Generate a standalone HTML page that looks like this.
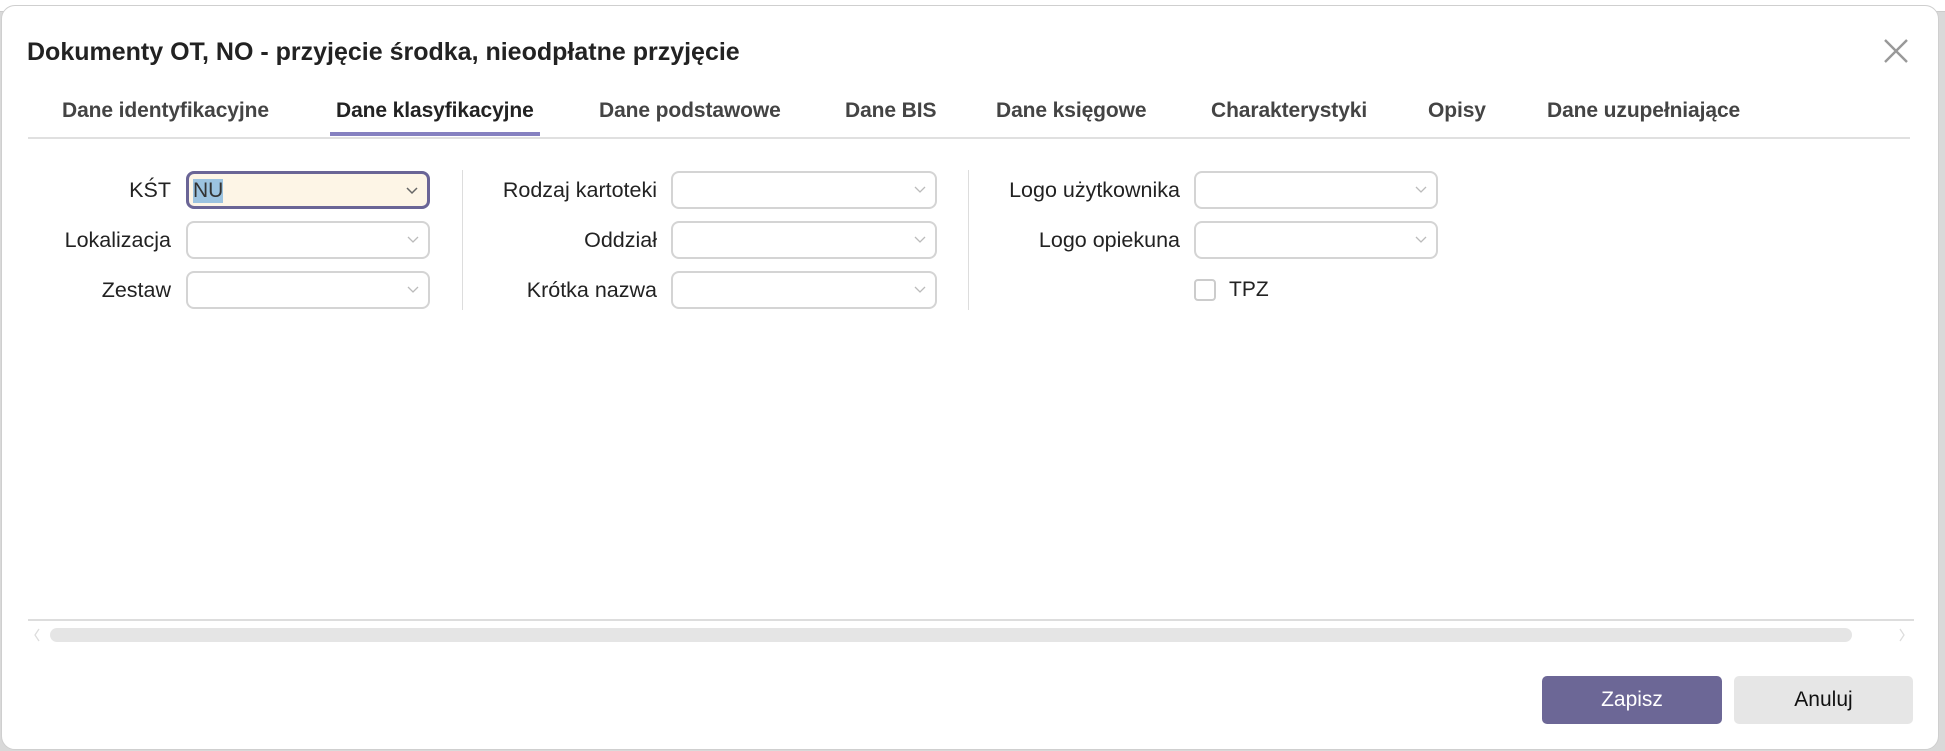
<!DOCTYPE html>
<html><head><meta charset="utf-8"><style>
*{box-sizing:border-box;margin:0;padding:0}
body{width:1945px;height:751px;background:#d9d9d9;position:relative;overflow:hidden;font-family:"Liberation Sans",sans-serif;color:#222}
.bg{position:absolute;left:0;top:0;width:1945px;height:12px;background:#fff;border-bottom:1px solid #ccc}
.dlg{position:absolute;left:1px;top:5px;width:1938px;height:745px;background:#fff;border-radius:14px;border:1px solid #cfcfcf}
.a{position:absolute;white-space:nowrap}
.title{left:27px;top:38px;font-size:25px;font-weight:bold;color:#222}
.tab{top:99px;font-size:21px;color:#444;font-weight:bold;letter-spacing:-0.1px}
.lbl{font-size:21.5px;color:#222;text-align:right;height:38px;line-height:38px}
.box{position:absolute;height:38px;border:2px solid #d4d4d4;border-radius:8px;background:#fff}
.box svg{position:absolute;right:9px;top:13px}
.sep{position:absolute;width:1px;background:#ddd}
</style></head><body>
<div class="bg"></div>
<div class="dlg"></div>
<div class="a title">Dokumenty OT, NO - przyjęcie środka, nieodpłatne przyjęcie</div>
<svg class="a" style="left:1884px;top:39px" width="24" height="24" viewBox="0 0 24 24"><path d="M1 1L23 23M23 1L1 23" stroke="#999" stroke-width="2.4" fill="none"/></svg>
<div class="a tab" style="left:62px">Dane identyfikacyjne</div>
<div class="a tab" style="left:336px;color:#222">Dane klasyfikacyjne</div>
<div class="a tab" style="left:599px">Dane podstawowe</div>
<div class="a tab" style="left:845px">Dane BIS</div>
<div class="a tab" style="left:996px">Dane księgowe</div>
<div class="a tab" style="left:1211px">Charakterystyki</div>
<div class="a tab" style="left:1428px">Opisy</div>
<div class="a tab" style="left:1547px">Dane uzupełniające</div>
<div class="a" style="left:28px;top:137px;width:1882px;height:2px;background:#e0e0e0"></div>
<div class="a" style="left:330px;top:132px;width:210px;height:4px;background:#8580c0"></div>

<div class="a lbl" style="right:1774px;top:171px">KŚT</div>
<div class="a lbl" style="right:1774px;top:221px">Lokalizacja</div>
<div class="a lbl" style="right:1774px;top:271px">Zestaw</div>
<div class="box" style="left:186px;top:171px;width:244px;background:#fdf5e6;border:3px solid #6a6596"><span style="position:absolute;left:4px;top:5px;font-size:21px;background:#9cc3e0;line-height:24px;color:#333">NU</span><svg width="12" height="8" viewBox="0 0 12 8"><path d="M1 1L6 6L11 1" stroke="#666" stroke-width="1.5" fill="none"/></svg></div>
<div class="box" style="left:186px;top:221px;width:244px"><svg width="12" height="8" viewBox="0 0 12 8"><path d="M1 1L6 6L11 1" stroke="#bbb" stroke-width="1.3" fill="none"/></svg></div>
<div class="box" style="left:186px;top:271px;width:244px"><svg width="12" height="8" viewBox="0 0 12 8"><path d="M1 1L6 6L11 1" stroke="#bbb" stroke-width="1.3" fill="none"/></svg></div>
<div class="sep" style="left:462px;top:170px;height:140px"></div>

<div class="a lbl" style="right:1288px;top:171px">Rodzaj kartoteki</div>
<div class="a lbl" style="right:1288px;top:221px">Oddział</div>
<div class="a lbl" style="right:1288px;top:271px">Krótka nazwa</div>
<div class="box" style="left:671px;top:171px;width:266px"><svg width="12" height="8" viewBox="0 0 12 8"><path d="M1 1L6 6L11 1" stroke="#bbb" stroke-width="1.3" fill="none"/></svg></div>
<div class="box" style="left:671px;top:221px;width:266px"><svg width="12" height="8" viewBox="0 0 12 8"><path d="M1 1L6 6L11 1" stroke="#bbb" stroke-width="1.3" fill="none"/></svg></div>
<div class="box" style="left:671px;top:271px;width:266px"><svg width="12" height="8" viewBox="0 0 12 8"><path d="M1 1L6 6L11 1" stroke="#bbb" stroke-width="1.3" fill="none"/></svg></div>
<div class="sep" style="left:968px;top:170px;height:140px"></div>

<div class="a lbl" style="right:765px;top:171px">Logo użytkownika</div>
<div class="a lbl" style="right:765px;top:221px">Logo opiekuna</div>
<div class="box" style="left:1194px;top:171px;width:244px"><svg width="12" height="8" viewBox="0 0 12 8"><path d="M1 1L6 6L11 1" stroke="#bbb" stroke-width="1.3" fill="none"/></svg></div>
<div class="box" style="left:1194px;top:221px;width:244px"><svg width="12" height="8" viewBox="0 0 12 8"><path d="M1 1L6 6L11 1" stroke="#bbb" stroke-width="1.3" fill="none"/></svg></div>
<div class="a" style="left:1194px;top:279px;width:22px;height:22px;border:2px solid #ccc;border-radius:4px"></div>
<div class="a" style="left:1229px;top:278px;font-size:21px;line-height:24px">TPZ</div>

<div class="a" style="left:28px;top:619px;width:1886px;height:2px;background:#ddd"></div>
<div class="a" style="left:50px;top:628px;width:1802px;height:14px;background:#e5e5e5;border-radius:7px"></div>
<svg class="a" style="left:33px;top:628px" width="8" height="14" viewBox="0 0 8 14"><path d="M6 1L2 7L6 13" stroke="#ddd" stroke-width="1.3" fill="none"/></svg>
<svg class="a" style="left:1898px;top:628px" width="8" height="14" viewBox="0 0 8 14"><path d="M2 1L6 7L2 13" stroke="#ddd" stroke-width="1.3" fill="none"/></svg>

<div class="a" style="left:1542px;top:676px;width:180px;height:48px;background:#6c6796;border-radius:5px;color:#fff;font-size:21px;text-align:center;line-height:48px">Zapisz</div>
<div class="a" style="left:1734px;top:676px;width:179px;height:48px;background:#e6e6e6;border-radius:5px;color:#111;font-size:21px;text-align:center;line-height:48px">Anuluj</div>
</body></html>
